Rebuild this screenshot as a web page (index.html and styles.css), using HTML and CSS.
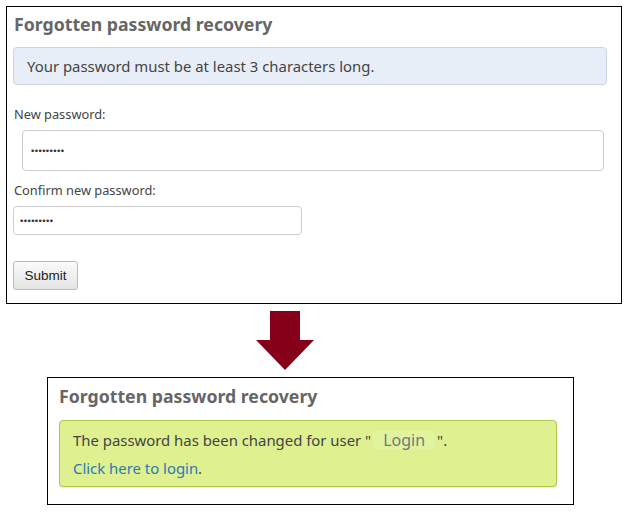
FILE: index.html
```html
<!DOCTYPE html>
<html lang="en">
<head>
    <meta charset="UTF-8">
    <title>Forgotten password recovery</title>
    <link rel="stylesheet" href="styles.css">
</head>
<body>
    <div class="panel panel-form">
        <h2>Forgotten password recovery</h2>
        <div class="notice notice-info">Your password must be at least 3 characters long.</div>
        <form class="recovery-form">
            <label for="pw1">New password:</label>
            <input id="pw1" class="field field-wide" type="password" value="password1">
            <label for="pw2">Confirm new password:</label>
            <input id="pw2" class="field field-narrow" type="password" value="password1">
            <button type="button" class="submit">Submit</button>
        </form>
    </div>

    <div class="arrow">
        <svg width="58" height="60" viewBox="0 0 58 60">
            <polygon points="14,0 44,0 44,29 58,29 29,59 0,29 14,29" fill="#870019"/>
        </svg>
    </div>

    <div class="panel panel-done">
        <h2>Forgotten password recovery</h2>
        <div class="notice notice-success">
            <p>The password has been changed for user "<span class="user">Login</span>".</p>
            <p><a href="#">Click here to login</a>.</p>
        </div>
    </div>
</body>
</html>
```

FILE: styles.css
```css
* {
    margin: 0;
    padding: 0;
    box-sizing: border-box;
}

body {
    background: #fff;
    font-family: 'Noto Sans', 'Open Sans', sans-serif;
    color: #444;
    width: 634px;
    height: 515px;
    overflow: hidden;
}

.panel {
    border: 1px solid #000;
    background: #fff;
}

.panel h2 {
    font-size: 17.7px;
    font-weight: 700;
    color: #666;
    line-height: 24px;
}

.panel-form {
    margin: 6px 0 0 6px;
    width: 616px;
    height: 298px;
    padding: 5px 14px 0 6px;
}

.panel-form h2 {
    margin-left: 1px;
}

.notice {
    border-radius: 4px;
    font-size: 14.9px;
    line-height: 20px;
}

.notice-info {
    margin-top: 11px;
    height: 38px;
    padding: 8px 13px;
    background: #e8eef8;
    border: 1px solid #c9d5e6;
}

.recovery-form {
    display: flex;
    flex-direction: column;
    align-items: flex-start;
    font-size: 12.8px;
}

.recovery-form label {
    margin: 20px 0 0 1px;
    line-height: 18px;
    color: #444;
}

.recovery-form label + input {
    margin-top: 7px;
}

.field {
    border: 1px solid #ccc;
    border-radius: 4px;
    background: #fff;
    padding: 0 10px;
    font-size: 9px;
    color: #333;
    font-family: 'DejaVu Sans', sans-serif;
    letter-spacing: -1.6px;
}

.field-wide {
    width: 582px;
    height: 41px;
    margin-left: 9px;
    padding-left: 7px;
}

.recovery-form label:nth-of-type(2) {
    margin-top: 10px;
}

.field-narrow {
    width: 289px;
    height: 29px;
    padding-left: 5px;
}

.submit {
    margin-top: 26px;
    width: 65px;
    height: 29px;
    font-family: 'Liberation Sans', Arial, sans-serif;
    font-size: 13.5px;
    color: #222;
    background: linear-gradient(#fafafa, #e4e4e4);
    border: 1px solid #bbb;
    border-radius: 3px;
}

.arrow {
    display: flex;
    margin: 7px 0 0 256px;
    height: 66px;
}

.panel-done {
    margin-left: 47px;
    width: 527px;
    height: 128px;
    padding: 6px 16px 0 11px;
}

.notice-success {
    margin-top: 12px;
    height: 67px;
    padding: 5px 13px;
    background: #def090;
    border: 1px solid #a9c94b;
    box-shadow: 0 1px 1px rgba(0, 0, 0, 0.08);
}

.notice-success p {
    line-height: 28px;
    color: #444;
}

.user {
    display: inline-block;
    background: #e2f3a0;
    color: #777;
    padding: 0 10px;
    margin: 0 2px;
    line-height: 18px;
    font-size: 16px;
}

.notice-success a {
    color: #2b79b8;
    text-decoration: none;
}
```
